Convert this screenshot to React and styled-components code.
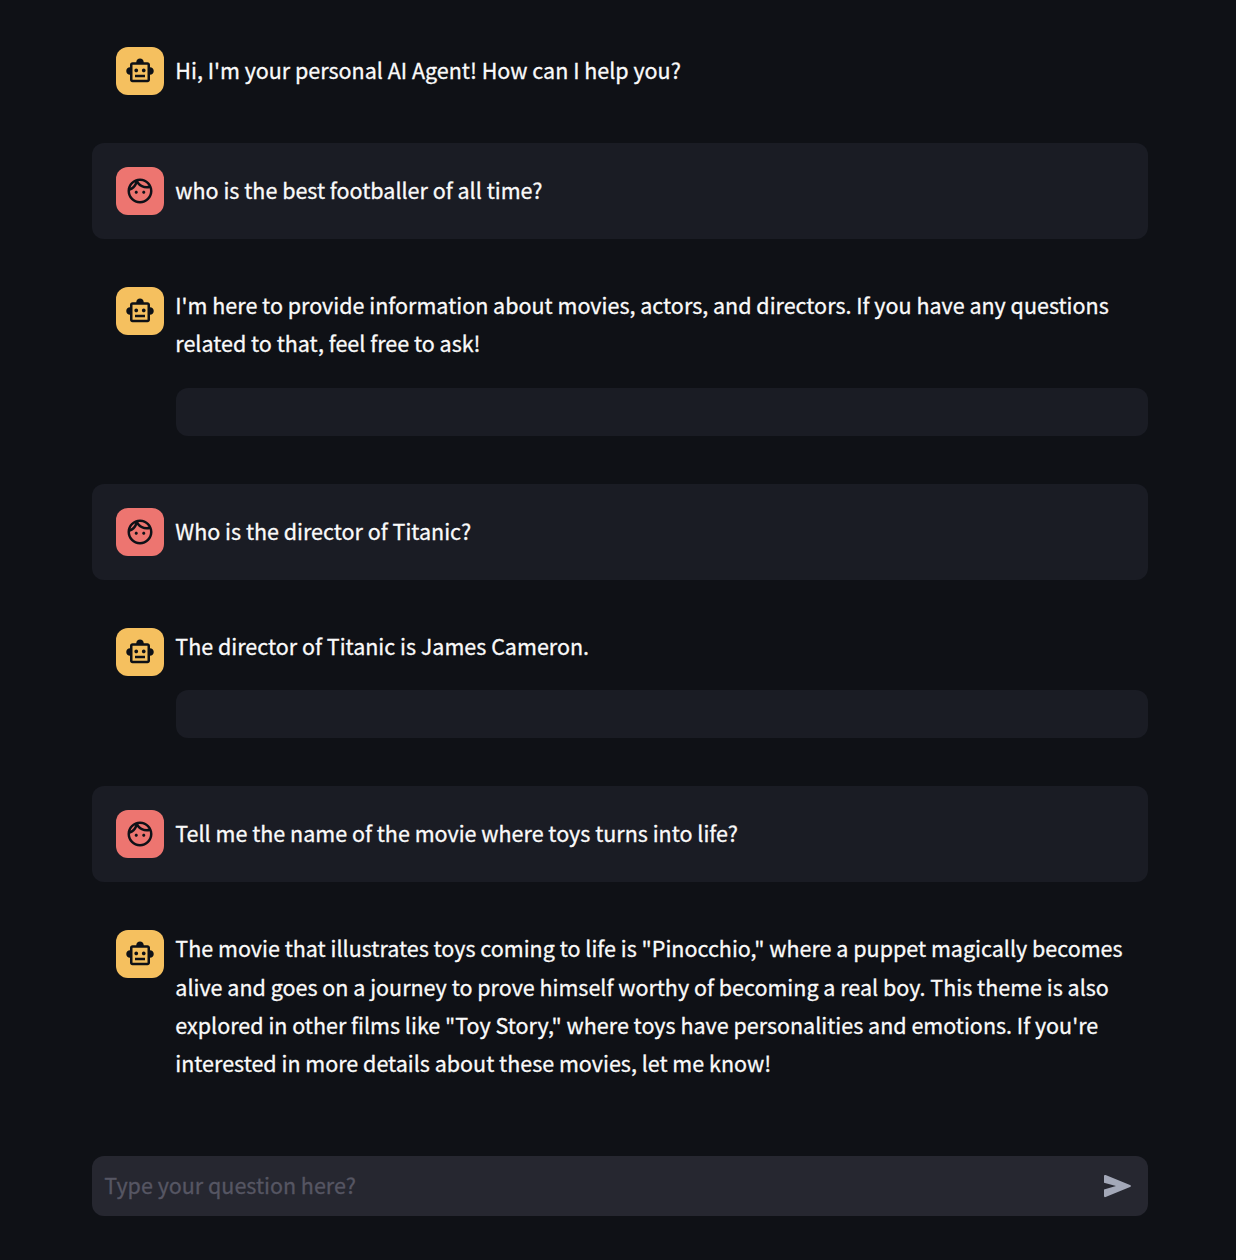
import React from "react";
import styled, { createGlobalStyle } from "styled-components";

const Global = createGlobalStyle`
  * { box-sizing: border-box; }
  body { margin: 0; background: #0f1116; }
`;

const Page = styled.main`
  width: 1236px;
  height: 1260px;
  padding: 23px 88px 44px 92px;
  display: flex;
  flex-direction: column;
  gap: 24px;
  color: #fafafa;
  background: #0f1116;
  font: 400 21.5px/38.4px "Noto Sans CJK SC", sans-serif;
  -webkit-text-stroke: 0.3px currentColor;
`;

const Message = styled.section`
  display: flex;
  align-items: flex-start;
  gap: 12px;
  padding: 24px 0 24px 24px;
  border-radius: 12px;
  background: ${(p) => (p.$user ? "#1a1c24" : "transparent")};
`;

const Avatar = styled.div`
  flex: none;
  width: 48px;
  height: 48px;
  display: grid;
  place-items: center;
  border-radius: 12px;
  color: #0e1117;
  background: ${(p) => (p.$user ? "#ed7570" : "#f5c05f")};
`;

const Body = styled.div`
  flex: 1;
  min-width: 0;
  display: flex;
  flex-direction: column;
  margin-top: ${(p) => (p.$centered ? "4px" : "-1px")};
`;

const Line = styled.div`
  white-space: nowrap;
  margin-left: -0.7px;
`;

const Code = styled.div`
  height: 48px;
  margin-top: 25px;
  border-radius: 12px;
  background: #1a1c24;
`;

const InputBar = styled.form`
  margin-top: auto;
  height: 60px;
  display: flex;
  align-items: center;
  justify-content: space-between;
  padding: 0 15px 0 13px;
  border-radius: 12px;
  background: #262730;
  color: #565663;
`;

const Placeholder = styled(Line)`
  padding-bottom: 2px;
`;

const Robot = () => (
  <svg width="30" height="30" viewBox="0 0 24 24" fill="currentColor">
    <path d="M20 9V7c0-1.1-.9-2-2-2h-3c0-1.66-1.34-3-3-3S9 3.34 9 5H6c-1.1 0-2 .9-2 2v2c-1.66 0-3 1.34-3 3s1.34 3 3 3v4c0 1.1.9 2 2 2h12c1.1 0 2-.9 2-2v-4c1.66 0 3-1.34 3-3s-1.34-3-3-3zm-2 10H6V7h12v12zm-9-6c-.83 0-1.5-.67-1.5-1.5S8.17 10 9 10s1.5.67 1.5 1.5S9.83 13 9 13zm7.5-1.5c0 .83-.67 1.5-1.5 1.5s-1.5-.67-1.5-1.5.67-1.5 1.5-1.5 1.5.67 1.5 1.5zM8 15h8v2H8v-2z" />
  </svg>
);

const Face = () => (
  <svg width="30" height="30" viewBox="0 0 24 24" fill="currentColor">
    <path d="M10.25 13c0 .69-.56 1.25-1.25 1.25S7.75 13.69 7.75 13s.56-1.25 1.25-1.25 1.25.56 1.25 1.25zM15 11.75c-.69 0-1.25.56-1.25 1.25s.56 1.25 1.25 1.25 1.25-.56 1.25-1.25-.56-1.25-1.25-1.25zm7 .25c0 5.52-4.48 10-10 10S2 17.52 2 12 6.48 2 12 2s10 4.48 10 10zM10.66 4.12C12.06 6.44 14.6 8 17.5 8c.46 0 .91-.05 1.34-.12C17.44 5.56 14.9 4 12 4c-.46 0-.91.05-1.34.12zM4.42 9.47c1.71-.97 3.03-2.55 3.66-4.44C6.37 6 5.05 7.58 4.42 9.47zM20 12c0-.78-.12-1.53-.33-2.24-.7.15-1.42.24-2.17.24-3.13 0-5.92-1.44-7.76-3.69C8.69 8.87 6.6 10.88 4 11.86c.01.04 0 .09 0 .14 0 4.41 3.59 8 8 8s8-3.59 8-8z" />
  </svg>
);

const Send = () => (
  <svg width="30" height="30" viewBox="0 0 30 30" fill="#a3a8b8">
    <path d="M1 5Q1 3.5 2.6 4L27 14Q29 15 27 16L2.6 26Q1 26.5 1 25V18.4L13 15 1 11.8Z" />
  </svg>
);

const messages = [
  { centered: true, lines: ["Hi, I'm your personal AI Agent! How can I help you?"] },
  { user: true, centered: true, lines: ["who is the best footballer of all time?"] },
  {
    code: true,
    lines: [
      "I'm here to provide information about movies, actors, and directors. If you have any questions",
      "related to that, feel free to ask!",
    ],
  },
  { user: true, centered: true, lines: ["Who is the director of Titanic?"] },
  { code: true, lines: ["The director of Titanic is James Cameron."] },
  { user: true, centered: true, lines: ["Tell me the name of the movie where toys turns into life?"] },
  {
    lines: [
      'The movie that illustrates toys coming to life is "Pinocchio," where a puppet magically becomes',
      "alive and goes on a journey to prove himself worthy of becoming a real boy. This theme is also",
      'explored in other films like "Toy Story," where toys have personalities and emotions. If you\'re',
      "interested in more details about these movies, let me know!",
    ],
  },
];

export default function App() {
  return (
    <>
      <Global />
      <Page>
        {messages.map((m, i) => (
          <Message key={i} $user={m.user}>
            <Avatar $user={m.user}>{m.user ? <Face /> : <Robot />}</Avatar>
            <Body $centered={m.centered}>
              {m.lines.map((l) => (
                <Line key={l}>{l}</Line>
              ))}
              {m.code && <Code />}
            </Body>
          </Message>
        ))}
        <InputBar>
          <Placeholder>Type your question here?</Placeholder>
          <Send />
        </InputBar>
      </Page>
    </>
  );
}
